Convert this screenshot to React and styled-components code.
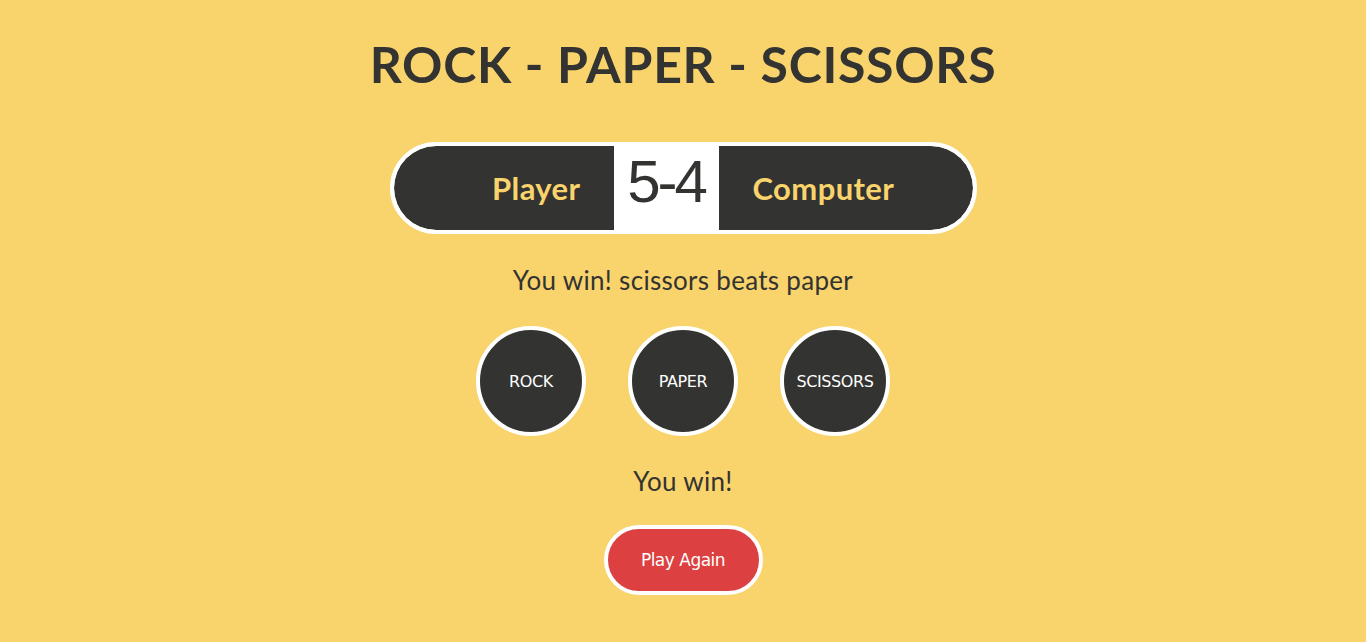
import React, { useState } from 'react';
import styled, { createGlobalStyle } from 'styled-components';

const GlobalStyle = createGlobalStyle`
  html, body {
    margin: 0;
    padding: 0;
    background: #f9d46c;
  }
`;

const Page = styled.main`
  min-height: 642px;
  background: #f9d46c;
  display: flex;
  flex-direction: column;
  align-items: center;
  color: #333331;
  font-family: Lato, "Open Sans", sans-serif;
`;

const Title = styled.h1`
  margin: 36px 0 0;
  font-size: 50px;
  line-height: 56px;
  font-weight: 700;
  letter-spacing: 0.7px;
`;

const Board = styled.div`
  margin-top: 50px;
  display: flex;
  border: 4px solid #fff;
  border-radius: 48px;
  overflow: hidden;
  background: #fff;
`;

const Side = styled.div`
  box-sizing: border-box;
  width: ${p => p.$width}px;
  height: 84px;
  display: flex;
  align-items: center;
  justify-content: ${p => (p.$left ? 'flex-end' : 'flex-start')};
  padding: ${p => (p.$left ? '0 33px 0 0' : '0 0 0 34px')};
  border-radius: ${p => (p.$left ? '44px 0 0 44px' : '0 44px 44px 0')};
  background: #333331;
  color: #f9d46c;
  font-size: 31px;
  font-weight: 700;
  letter-spacing: 0.4px;
`;

const Score = styled.div`
  box-sizing: border-box;
  width: 105px;
  height: 84px;
  padding-bottom: 14px;
  display: flex;
  align-items: center;
  justify-content: center;
  font-family: "Liberation Sans", Arial, sans-serif;
  font-size: 60px;
  font-weight: 400;
  letter-spacing: -3px;
  color: #333331;
`;

const Message = styled.p`
  margin: 28px 0 0;
  font-size: 26px;
  line-height: 36px;
  font-weight: 400;
  letter-spacing: 0.3px;
`;

const Choices = styled.div`
  margin-top: 28px;
  display: flex;
  gap: 42px;
`;

const Choice = styled.button`
  width: 110px;
  height: 110px;
  border-radius: 50%;
  border: 4px solid #fff;
  background: #333331;
  color: #fff;
  font-family: "DejaVu Sans", Tahoma, sans-serif;
  font-size: 16px;
  letter-spacing: -0.4px;
  padding: 0;
  cursor: pointer;
`;

const Result = styled.p`
  margin: 27px 0 0;
  font-size: 26px;
  line-height: 36px;
  letter-spacing: 0.3px;
`;

const PlayAgain = styled.button`
  margin-top: 26px;
  width: 159px;
  height: 70px;
  border-radius: 35px;
  border: 4px solid #fff;
  background: #dd4040;
  color: #fff;
  font-family: "DejaVu Sans", Tahoma, sans-serif;
  font-size: 17px;
  letter-spacing: -0.5px;
  cursor: pointer;
`;

export default function App() {
  const [score] = useState({ player: 5, computer: 4 });
  const choices = ['ROCK', 'PAPER', 'SCISSORS'];

  return (
    <Page>
      <GlobalStyle />
      <Title>ROCK - PAPER - SCISSORS</Title>
      <Board>
        <Side $left $width={220}>Player</Side>
        <Score>{score.player}-{score.computer}</Score>
        <Side $width={254}>Computer</Side>
      </Board>
      <Message>You win! scissors beats paper</Message>
      <Choices>
        {choices.map(c => (
          <Choice key={c}>{c}</Choice>
        ))}
      </Choices>
      <Result>You win!</Result>
      <PlayAgain>Play Again</PlayAgain>
    </Page>
  );
}
